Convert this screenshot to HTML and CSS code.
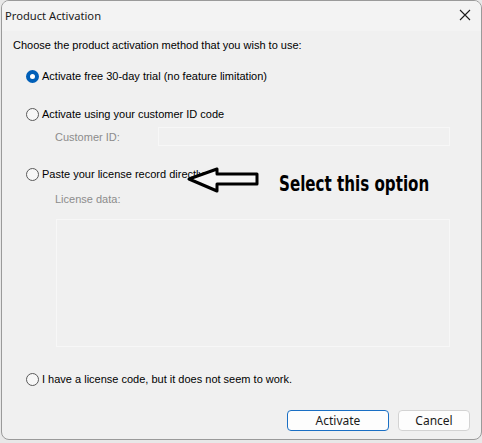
FILE: index.html
```html
<!DOCTYPE html>
<html>
<head>
<meta charset="utf-8">
<link rel="stylesheet" href="styles.css">
</head>
<body>
<div class="window">
  <div class="titlebar">
    <span class="title">Product Activation</span>
    <svg class="close" width="12" height="12" viewBox="0 0 12 12"><path d="M1 1 L11 11 M11 1 L1 11" stroke="#1b1b1b" stroke-width="1.1" fill="none"/></svg>
  </div>
  <div class="content">
    <p class="intro">Choose the product activation method that you wish to use:</p>
    <div class="radio checked r1"><span class="dot"></span><span>Activate free 30-day trial (no feature limitation)</span></div>
    <div class="radio r2"><span class="dot"></span><span>Activate using your customer ID code</span></div>
    <div class="field-row"><span class="label">Customer ID:</span><div class="input"></div></div>
    <div class="radio r3"><span class="dot"></span><span>Paste your license record directly</span></div>
    <div class="label ld">License data:</div>
    <div class="textarea"></div>
    <div class="radio r4"><span class="dot"></span><span>I have a license code, but it does not seem to work.</span></div>
    <div class="buttons">
      <button class="btn primary">Activate</button>
      <button class="btn">Cancel</button>
    </div>
  </div>
  <svg class="arrow" width="74" height="28" viewBox="0 0 74 28"><path d="M2 12 L30 2 L30 7 L70 7 L70 17 L30 17 L30 24 Z" fill="#f6f6f6" stroke="#000" stroke-width="3" stroke-linejoin="round"/></svg>
  <span class="note">Select this option</span>
</div>
</body>
</html>
```
FILE: styles.css
```css
html, body {
  margin: 0;
  padding: 0;
  background: #e8e8e8;
}
.window {
  position: relative;
  width: 479px;
  height: 438px;
  margin-left: 1px;
  border: 1px solid #9a9a9a;
  border-radius: 8px;
  background: #f0f0f0;
  overflow: hidden;
  font-family: "Liberation Sans", Arial, sans-serif;
  font-size: 11px;
  color: #000;
}
.titlebar {
  height: 28px;
  padding: 0 10px 2px 3px;
  background: #f3f3f3;
  display: flex;
  align-items: center;
  justify-content: space-between;
}
.title {
  font-family: "Noto Sans", sans-serif;
  font-size: 11.2px;
  color: #1a1a1a;
}
.content {
  padding: 0 0 0 11px;
}
.intro {
  margin: 7px 0 0 0;
  line-height: 14px;
}
.radio {
  display: flex;
  align-items: center;
  gap: 3px;
  height: 14px;
  line-height: 14px;
  margin-left: 13px;
}
.dot {
  box-sizing: border-box;
  flex: none;
  width: 13px;
  height: 13px;
  border: 1px solid #5a5a5a;
  border-radius: 50%;
  background: #f7f7f7;
}
.checked .dot {
  background: #fff;
  border: 4px solid #005fb8;
}
.r1 { margin-top: 17px; }
.r2 { margin-top: 24px; }
.field-row {
  display: flex;
  align-items: center;
  margin-top: 6px;
  height: 19px;
}
.label {
  color: #8c8c8c;
}
.field-row .label {
  margin-left: 42px;
  width: 103px;
}
.input {
  width: 290px;
  height: 17px;
  border: 1px solid #f7f7f7;
}
.r3 { margin-top: 21px; }
.ld {
  margin: 11px 0 0 42px;
  line-height: 14px;
}
.textarea {
  margin: 13px 0 0 43px;
  width: 392px;
  height: 126px;
  border: 1px solid #f7f7f7;
}
.r4 { margin-top: 25px; }
.buttons {
  display: flex;
  justify-content: flex-end;
  gap: 9px;
  margin: 24px 11px 0 0;
}
.btn {
  font-family: "Noto Sans", sans-serif;
  font-size: 12px;
  height: 21px;
  padding: 0;
  border: 1px solid #d3d3d3;
  border-radius: 4px;
  background: #fdfdfd;
  color: #1a1a1a;
  width: 72px;
  line-height: 19px;
}
.btn.primary {
  width: 102px;
  border-color: #1a6fc4;
}
.arrow {
  position: absolute;
  left: 185px;
  top: 166px;
}
.note {
  position: absolute;
  left: 277px;
  top: 171px;
  display: inline-block;
  transform: scaleX(0.72);
  transform-origin: left center;
  font-family: "DejaVu Sans", sans-serif;
  font-weight: bold;
  font-size: 21px;
  line-height: 24px;
  color: #000;
  white-space: nowrap;
}
```
